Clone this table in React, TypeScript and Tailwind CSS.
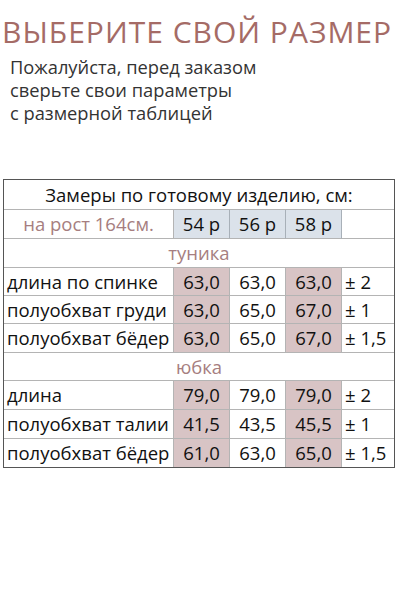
import React from "react";

const rose = "text-[#a67e80]";

function Cell({
  children,
  className = "",
}: {
  children?: React.ReactNode;
  className?: string;
}) {
  return <div className={"flex items-center " + className}>{children}</div>;
}

type Row = { label: string; a: string; b: string; c: string; tol: string; h: string; last?: boolean };

function DataRow({ r }: { r: Row }) {
  const bb = r.last ? "" : " border-b border-b-[#b4b4b4]";
  return (
    <div className={"flex " + r.h}>
      <Cell className={"w-[170px] pl-[3px] border-r border-r-[#b4b4b4]" + bb}>{r.label}</Cell>
      <Cell className={"w-[56px] justify-center bg-[#d8c4c5] border-r border-r-[#b4b4b4]" + bb}>{r.a}</Cell>
      <Cell className={"w-[56px] justify-center border-r border-r-[#b4b4b4]" + bb}>{r.b}</Cell>
      <Cell className={"w-[56px] justify-center bg-[#d8c4c5] border-r border-r-[#b4b4b4]" + bb}>{r.c}</Cell>
      <Cell className={"flex-1 pl-[3px]" + bb}>{r.tol}</Cell>
    </div>
  );
}

export default function App() {
  const tunic: Row[] = [
    { label: "длина по спинке", a: "63,0", b: "63,0", c: "63,0", tol: "± 2", h: "h-[28px]" },
    { label: "полуобхват груди", a: "63,0", b: "65,0", c: "67,0", tol: "± 1", h: "h-[28px]" },
    { label: "полуобхват бёдер", a: "63,0", b: "65,0", c: "67,0", tol: "± 1,5", h: "h-[29px]" },
  ];
  const skirt: Row[] = [
    { label: "длина", a: "79,0", b: "79,0", c: "79,0", tol: "± 2", h: "h-[29px]" },
    { label: "полуобхват талии", a: "41,5", b: "43,5", c: "45,5", tol: "± 1", h: "h-[29px]" },
    { label: "полуобхват бёдер", a: "61,0", b: "63,0", c: "65,0", tol: "± 1,5", h: "h-[28px]", last: true },
  ];
  return (
    <div className="w-[400px] h-[600px] bg-white overflow-hidden">
      <div className="pt-[14px] pl-[2px]">
        <h1
          className="text-[30px] leading-[35px] tracking-[1px] text-[#a56b66] whitespace-nowrap"
          style={{ fontFamily: '"Open Sans", sans-serif' }}
        >
          ВЫБЕРИТЕ СВОЙ РАЗМЕР
        </h1>
      </div>
      <div
        className="mt-[6px] pl-[10px] text-[18.3px] leading-[23px] text-[#333333]"
        style={{ fontFamily: '"Open Sans", sans-serif' }}
      >
        <div>Пожалуйста, перед заказом</div>
        <div>сверьте свои параметры</div>
        <div>с размерной таблицей</div>
      </div>

      <div
        className="mt-[55px] ml-[3px] w-[392px] border border-[#555555] text-[18.5px] text-[#111111]"
        style={{ fontFamily: '"Open Sans", sans-serif' }}
      >
        <div className="h-[30px] flex items-center justify-center border-b border-b-[#b4b4b4]">
          Замеры по готовому изделию, см:
        </div>
        <div className="flex h-[29px]">
          <Cell className={"w-[170px] justify-center border-r border-r-[#b4b4b4] border-b border-b-[#b4b4b4] " + rose}>
            на рост 164см.
          </Cell>
          <Cell className="w-[56px] justify-center bg-[#dbe2ea] border-r border-r-[#a8b0b8] border-b border-b-[#b4b4b4]">54 р</Cell>
          <Cell className="w-[56px] justify-center bg-[#dbe2ea] border-r border-r-[#a8b0b8] border-b border-b-[#b4b4b4]">56 р</Cell>
          <Cell className="w-[56px] justify-center bg-[#dbe2ea] border-r border-r-[#a8b0b8] border-b border-b-[#b4b4b4]">58 р</Cell>
          <Cell className="flex-1 border-b border-b-[#b4b4b4]"></Cell>
        </div>
        <div className={"h-[29px] flex items-center justify-center border-b border-b-[#b4b4b4] " + rose}>туника</div>
        {tunic.map((r, i) => (
          <DataRow key={i} r={r} />
        ))}
        <div className={"h-[28px] flex items-center justify-center border-b border-b-[#b4b4b4] " + rose}>юбка</div>
        {skirt.map((r, i) => (
          <DataRow key={i} r={r} />
        ))}
      </div>
    </div>
  );
}
